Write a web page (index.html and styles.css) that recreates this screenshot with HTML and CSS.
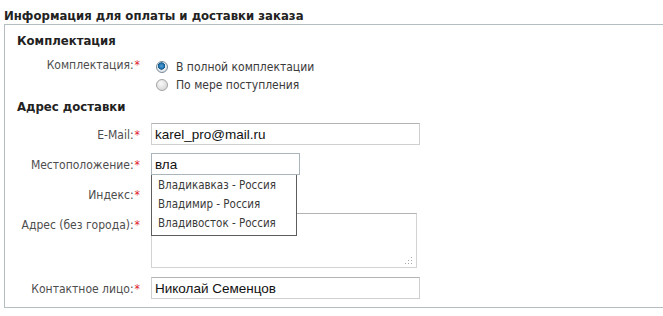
FILE: index.html
```html
<!DOCTYPE html>
<html lang="ru">
<head>
<meta charset="utf-8">
<title>Информация для оплаты и доставки заказа</title>
<link rel="stylesheet" href="styles.css">
</head>
<body>
<h1 class="title">Информация для оплаты и доставки заказа</h1>
<div class="box">
  <h2 class="section">Комплектация</h2>
  <div class="row">
    <span class="label">Комплектация:<span class="req">*</span></span>
    <div class="radios">
      <label class="radio"><input type="radio" name="k" checked><span>В полной комплектации</span></label>
      <label class="radio"><input type="radio" name="k"><span>По мере поступления</span></label>
    </div>
  </div>
  <h2 class="section section-2">Адрес доставки</h2>
  <div class="row">
    <span class="label label-input">E-Mail:<span class="req">*</span></span>
    <input class="inp inp-wide" type="text" value="karel_pro@mail.ru">
  </div>
  <div class="row">
    <span class="label label-input">Местоположение:<span class="req">*</span></span>
    <div class="suggest">
      <input class="inp inp-loc" type="text" value="вла">
      <ul class="dropdown">
        <li>Владикавказ - Россия</li>
        <li>Владимир - Россия</li>
        <li>Владивосток - Россия</li>
      </ul>
    </div>
  </div>
  <div class="row">
    <span class="label label-input">Индекс:<span class="req">*</span></span>
    <input class="inp inp-short" type="text">
  </div>
  <div class="row">
    <span class="label label-input">Адрес (без города):<span class="req">*</span></span>
    <div class="ta-wrap">
      <textarea class="ta"></textarea>
      <svg class="grip" width="9" height="9" viewBox="0 0 9 9"><g fill="#a9a9a9"><rect x="7" y="1" width="1" height="1"/><rect x="7" y="4" width="1" height="1"/><rect x="7" y="7" width="1" height="1"/><rect x="4" y="4" width="1" height="1"/><rect x="4" y="7" width="1" height="1"/><rect x="1" y="7" width="1" height="1"/></g></svg>
    </div>
  </div>
  <div class="row row-last">
    <span class="label label-input">Контактное лицо:<span class="req">*</span></span>
    <input class="inp inp-wide" type="text" value="Николай Семенцов">
  </div>
</div>
</body>
</html>
```
FILE: styles.css
```css
html, body {
  margin: 0;
  padding: 0;
  background: #fff;
}
body {
  padding: 0 0 0 4px;
  font-family: "DejaVu Sans Condensed", "DejaVu Sans", Verdana, sans-serif;
  font-size: 12px;
  color: #4a4a4a;
}
.title {
  margin: 0;
  padding-top: 8px;
  height: 16px;
  font-size: 13px;
  line-height: 16px;
  font-weight: bold;
  color: #222;
}
.box {
  border: 1px solid #b4bdc1;
  border-right: none;
  padding: 8px 0 8px 12px;
}
.section {
  margin: 0;
  font-size: 13px;
  line-height: 16px;
  font-weight: bold;
  color: #222;
}
.section-2 {
  margin-top: 6px;
}
.row {
  display: grid;
  grid-template-columns: 123px auto;
  column-gap: 11px;
  align-items: start;
  justify-content: start;
  margin-top: 8px;
}
.row-last {
  margin-top: 9px;
}
.label {
  text-align: right;
  line-height: 16px;
  color: #4d4d4d;
  white-space: nowrap;
}
.label-input {
  padding-top: 4px;
}
.req {
  color: #e01b2a;
  margin-left: 1px;
}
.radios {
  display: flex;
  flex-direction: column;
  gap: 2px;
  padding-left: 5px;
  padding-top: 2px;
}
.radio {
  display: flex;
  align-items: center;
  gap: 8px;
  line-height: 16px;
  color: #3a3a3a;
}
.radio input {
  appearance: none;
  -webkit-appearance: none;
  margin: 0;
  width: 12px;
  height: 12px;
  border-radius: 50%;
  border: 1px solid #a3a3a3;
  background: radial-gradient(circle at 40% 35%, #fafafa 0, #e3e3e3 50%, #cfcfcf 100%);
  box-sizing: border-box;
}
.radio input:checked {
  border-color: #7b8a96;
  background: radial-gradient(circle at 45% 40%, #5aa6df 0, #1f6ea8 32%, #175a8c 42%, #e8eef2 48%, #cfd6dc 100%);
}
.inp {
  box-sizing: border-box;
  height: 22px;
  margin: 0;
  border: 1px solid #cfcfcf;
  border-top-color: #b3b3b3;
  padding: 0 3px;
  font-family: "Liberation Sans", Arial, sans-serif;
  font-size: 13.5px;
  color: #111;
  background: #fff;
  outline: none;
}
.inp-wide {
  width: 269px;
}
.inp-loc {
  width: 149px;
  border-color: #a9b4bb;
}
.inp-short {
  width: 100px;
}
.suggest {
  position: relative;
}
.dropdown {
  position: absolute;
  left: 0;
  top: 22px;
  width: 146px;
  box-sizing: border-box;
  margin: 0;
  padding: 1px 0 2px 6px;
  list-style: none;
  border: 1px solid #5d5d5d;
  border-top: none;
  background: #fff;
  z-index: 2;
  font-size: 11.5px;
}
.dropdown li {
  line-height: 19px;
  color: #3a3a3a;
  white-space: nowrap;
}
.ta-wrap {
  position: relative;
  width: 266px;
  height: 55px;
}
.ta {
  box-sizing: border-box;
  display: block;
  width: 266px;
  height: 55px;
  margin: 0;
  border: 1px solid #d3d3d3;
  border-top-color: #b3b3b3;
  resize: none;
  outline: none;
}
.grip {
  position: absolute;
  right: 4px;
  bottom: 3px;
}
```
